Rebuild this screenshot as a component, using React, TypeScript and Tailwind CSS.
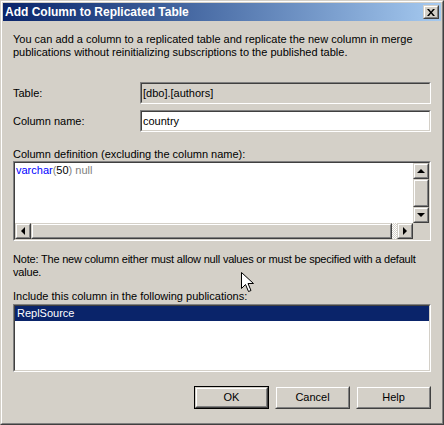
const font = { fontFamily: '"Liberation Sans", Arial, sans-serif' };

// classic sunken 2px edge
function Sunken({ className = '', inner = '', children }: { className?: string; inner?: string; children?: React.ReactNode }) {
  return (
    <div className={`border border-t-[#808080] border-l-[#808080] border-b-white border-r-white ${className}`}>
      <div className={`h-full border border-t-[#404040] border-l-[#404040] border-b-[#d4d0c8] border-r-[#d4d0c8] ${inner}`}>
        {children}
      </div>
    </div>
  );
}

function Raised({ className = '', children }: { className?: string; children?: React.ReactNode }) {
  return (
    <div className={`border border-t-[#d4d0c8] border-l-[#d4d0c8] border-b-[#404040] border-r-[#404040] bg-[#d4d0c8] ${className}`}>
      <div className="h-full w-full border border-t-white border-l-white border-b-[#808080] border-r-[#808080] flex items-center justify-center">
        {children}
      </div>
    </div>
  );
}

const Arrow = ({ dir }: { dir: 'up' | 'down' | 'left' | 'right' }) => {
  const pts = {
    up: '0,4 4,0 8,4',
    down: '0,0 8,0 4,4',
    left: '4,0 4,8 0,4',
    right: '0,0 0,8 4,4',
  }[dir];
  const horiz = dir === 'left' || dir === 'right';
  return (
    <svg width={horiz ? 5 : 9} height={horiz ? 9 : 5} viewBox={horiz ? '0 0 5 9' : '0 0 9 5'}>
      <polygon points={pts} fill="#000" />
    </svg>
  );
};

function Button({ label, isDefault }: { label: string; isDefault?: boolean }) {
  return (
    <div className={`w-[75px] h-[23px] ${isDefault ? 'border border-black' : ''}`}>
      <Raised className="w-full h-full">
        <span className="text-[11px] text-black">{label}</span>
      </Raised>
    </div>
  );
}

export default function App() {
  return (
    <div className="relative w-[444px] h-[425px] bg-[#d4d0c8] select-none" style={font}>
      <div className="w-full h-full border border-t-[#d4d0c8] border-l-[#d4d0c8] border-b-[#404040] border-r-[#404040]">
        <div className="w-full h-full border border-t-white border-l-white border-b-[#808080] border-r-[#808080] p-px flex flex-col">
          {/* title bar */}
          <div className="h-[18px] flex items-center justify-between pl-[2px] pr-[2px] bg-gradient-to-r from-[#0a246a] to-[#a6caf0]">
            <span className="text-white font-bold text-[12px] leading-none">Add Column to Replicated Table</span>
            <Raised className="w-[16px] h-[14px]">
              <svg width="8" height="7" viewBox="0 0 8 7">
                <path d="M0 0h2l2 2.5L6 0h2L5 3.5 8 7H6L4 4.5 2 7H0l3-3.5z" fill="#000" />
              </svg>
            </Raised>
          </div>

          <div className="flex-1 flex flex-col px-[10px] text-[11px] leading-[13px] text-black">
            <p className="mt-[12px]">
              You can add a column to a replicated table and replicate the new column in merge publications without reinitializing subscriptions to the published table.
            </p>

            <div className="mt-[23px] flex items-center">
              <span className="w-[127px]">Table:</span>
              <Sunken className="flex-1 h-[22px]" inner="bg-[#d4d0c8] flex items-center px-[1px]">
                <span>[dbo].[authors]</span>
              </Sunken>
            </div>

            <div className="mt-[6px] flex items-center">
              <span className="w-[127px]">Column name:</span>
              <Sunken className="flex-1 h-[22px]" inner="bg-white flex items-center px-[1px]">
                <span>country</span>
              </Sunken>
            </div>

            <p className="mt-[16px]">Column definition (excluding the column name):</p>

            <Sunken className="h-[80px]" inner="bg-white flex flex-col">
              <div className="flex-1 flex">
                <div className="flex-1 px-[1px] pt-[1px]">
                  <span className="text-[#0000ff]">varchar</span>
                  <span className="text-[#808080]">(</span>
                  <span>50</span>
                  <span className="text-[#808080]">) null</span>
                </div>
                <div className="w-[16px] flex flex-col bg-[#e8e6e1]">
                  <Raised className="h-[16px]"><Arrow dir="up" /></Raised>
                  <Raised className="flex-1" />
                  <Raised className="h-[16px]"><Arrow dir="down" /></Raised>
                </div>
              </div>
              <div className="h-[16px] flex">
                <Raised className="w-[16px]"><Arrow dir="left" /></Raised>
                <Raised className="w-[361px]" />
                <div className="flex-1 bg-[repeating-conic-gradient(#d4d0c8_0_25%,#ffffff_0_50%)] bg-[length:2px_2px]" />
                <Raised className="w-[16px]"><Arrow dir="right" /></Raised>
                <div className="w-[16px] bg-[#d4d0c8]" />
              </div>
            </Sunken>

            <p className="mt-[12px] tracking-[-0.2px] -mr-[4px]">
              Note: The new column either must allow null values or must be specified with a default value.
            </p>

            <p className="mt-[11px]">Include this column in the following publications:</p>

            <Sunken className="mt-[1px] h-[68px]" inner="bg-white">
              <div className="h-[15px] bg-[#0a246a] text-white flex items-center px-[2px]">ReplSource</div>
            </Sunken>

            <div className="mt-[14px] flex justify-end gap-[6px]">
              <Button label="OK" isDefault />
              <Button label="Cancel" />
              <Button label="Help" />
            </div>
          </div>
        </div>
      </div>

      {/* mouse pointer */}
      <svg className="absolute left-[241px] top-[272px]" width="13" height="21" viewBox="0 0 13 21">
        <path d="M0.5 0.5v16l4-4 3 7 2.5-1-3-7h5.5z" fill="#fff" stroke="#000" strokeWidth="1" />
      </svg>
    </div>
  );
}
